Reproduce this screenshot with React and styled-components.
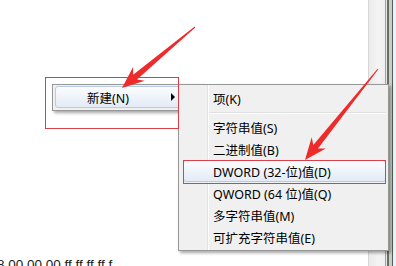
import React from 'react';
import styled, { createGlobalStyle } from 'styled-components';

const GlobalStyle = createGlobalStyle`
  html, body {
    margin: 0;
    padding: 0;
    background: #ffffff;
  }
  body {
    font-family: "Noto Sans", "Noto Sans CJK SC", sans-serif;
  }
`;

const Page = styled.div`
  position: relative;
  display: flex;
  width: 396px;
  height: 266px;
  overflow: hidden;
  background: #ffffff;
`;

const Content = styled.div`
  flex: 1;
  padding-top: 257px;
  overflow: hidden;
`;

const HexLine = styled.div`
  margin-left: -3px;
  font-family: "Liberation Sans", Arial, sans-serif;
  font-size: 13.5px;
  line-height: 15px;
  color: #1a1a1a;
  white-space: nowrap;
`;

const ScrollTrack = styled.div`
  width: 16px;
  border-left: 1px solid #d6d6d6;
  background: linear-gradient(to right, #ebebeb, #f4f4f4 60%, #eeeeee);
`;

const WindowEdge = styled.div`
  width: 11px;
  background: linear-gradient(
    to right,
    #a2a2a2 0 1px,
    #e4e4e4 1px 2px,
    #6a6d6a 2px 4px,
    #c6d1c1 4px 7px,
    #565a58 7px 8px,
    #e6f4f8 8px 11px
  );
`;

const Menu = styled.div`
  position: absolute;
  left: ${(p) => p.$left}px;
  top: ${(p) => p.$top}px;
  width: ${(p) => p.$width}px;
  box-sizing: border-box;
  display: flex;
  flex-direction: column;
  padding: ${(p) => p.$pad};
  background-color: #f0f0f0;
  border: 1px solid #979797;
  box-shadow: 2px 2px 3px rgba(0, 0, 0, 0.35);
`;

const SubMenu = styled(Menu)`
  background-image: linear-gradient(
    to right,
    transparent 28px,
    #e2e3e3 28px 29px,
    #ffffff 29px 30px,
    transparent 30px
  );
`;

const Item = styled.div`
  display: flex;
  align-items: center;
  justify-content: space-between;
  box-sizing: border-box;
  height: 22px;
  padding: 0 8px 0 ${(p) => p.$indent}px;
  font-size: 12.5px;
  color: #000000;
  white-space: nowrap;
  border: 1px solid ${(p) => (p.$active ? '#b7cbe4' : 'transparent')};
  border-radius: 3px;
  background: ${(p) =>
    p.$active ? 'linear-gradient(#fbfcfe, #e3ebf6)' : 'transparent'};
`;

const Separator = styled.div`
  height: 7px;
  margin-left: 26px;
  display: flex;
  align-items: center;

  &::before {
    content: '';
    flex: 1;
    height: 1px;
    border-top: 1px solid #e0e0e0;
    background: #ffffff;
  }
`;

const SubArrow = styled.span`
  width: 0;
  height: 0;
  margin-right: 15px;
  border-top: 4px solid transparent;
  border-bottom: 4px solid transparent;
  border-left: 4px solid #000000;
`;

const Annotations = styled.svg`
  position: absolute;
  left: 0;
  top: 0;
  pointer-events: none;
`;

const subItems = [
  { label: '项(K)' },
  { separator: true },
  { label: '字符串值(S)' },
  { label: '二进制值(B)' },
  { label: 'DWORD (32-位)值(D)', active: true },
  { label: 'QWORD (64 位)值(Q)' },
  { label: '多字符串值(M)' },
  { label: '可扩充字符串值(E)' },
];

const App = () => (
  <>
    <GlobalStyle />
    <Page>
      <Content>
        <HexLine>8 00 00 00 ff ff ff ff f</HexLine>
      </Content>
      <ScrollTrack />
      <WindowEdge />

      <Menu $left={52} $top={84} $width={150} $pad="1px 2px 2px 2px">
        <Item $active $indent={31}>
          新建(N)
          <SubArrow />
        </Item>
      </Menu>

      <SubMenu $left={178} $top={84} $width={211} $pad="2px 2px 2px 4px">
        {subItems.map((it, i) =>
          it.separator ? (
            <Separator key={i} />
          ) : (
            <Item key={i} $active={it.active} $indent={29}>
              {it.label}
            </Item>
          )
        )}
      </SubMenu>

      <Annotations width="396" height="266" viewBox="0 0 396 266">
        <rect x="45.5" y="77.5" width="133" height="51" fill="none" stroke="#d8404a" strokeWidth="1" />
        <rect x="183.5" y="160.5" width="202" height="23" fill="none" stroke="#d8404a" strokeWidth="1" />
        <polygon
          points="195.3,27.4 137,79.4 144.7,80.8 122,88 133.1,67 133.1,74.8 194.7,26.6"
          fill="#ee2b2b"
        />
        <polygon
          points="378.4,69.3 318,148.6 325.8,148.5 305,160 311.7,137.2 313.3,144.9 377.6,68.7"
          fill="#ee2b2b"
        />
      </Annotations>
    </Page>
  </>
);

export default App;
